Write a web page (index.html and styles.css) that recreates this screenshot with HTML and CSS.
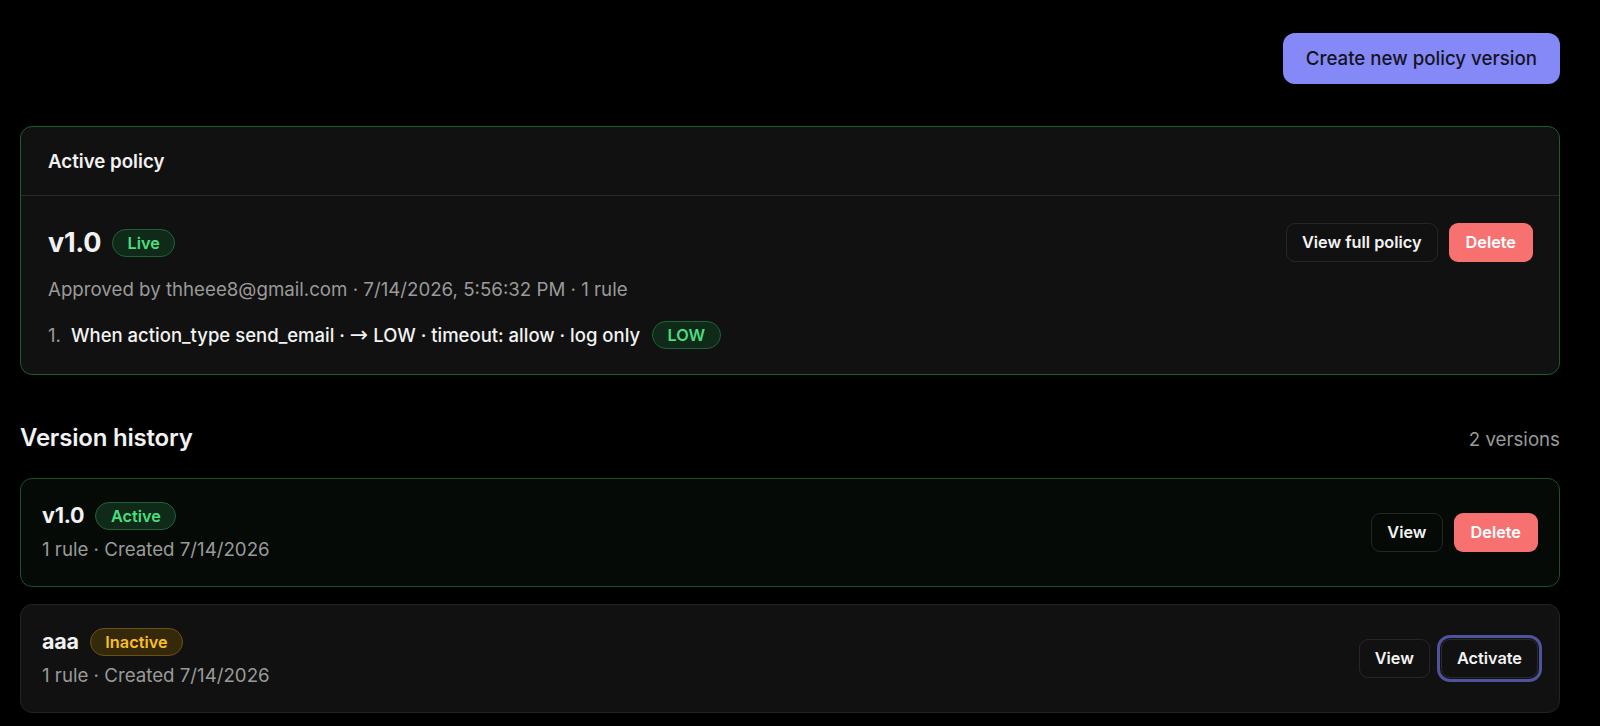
FILE: index.html
```html
<!DOCTYPE html>
<html lang="en">
<head>
<meta charset="utf-8">
<title>Policies</title>
<link rel="stylesheet" href="styles.css">
</head>
<body>
<main class="page">
  <div class="toolbar">
    <button class="btn btn-primary">Create new policy version</button>
  </div>

  <section class="card card-active">
    <header class="card-head">Active policy</header>
    <div class="card-body">
      <div class="policy-top">
        <div class="title-row">
          <h2 class="ver-big">v1.0</h2>
          <span class="badge badge-green">Live</span>
        </div>
        <div class="actions">
          <button class="btn btn-ghost">View full policy</button>
          <button class="btn btn-danger">Delete</button>
        </div>
      </div>
      <p class="meta">Approved by thheee8@gmail.com · 7/14/2026, 5:56:32 PM · 1 rule</p>
      <ol class="rules">
        <li><span class="num">1.</span><span class="rule-text">When action_type send_email · <span class="arrow">→</span> LOW · timeout: allow · log only</span><span class="badge badge-green">LOW</span></li>
      </ol>
    </div>
  </section>

  <div class="section-head">
    <h3>Version history</h3>
    <span class="count">2 versions</span>
  </div>

  <div class="versions">
    <div class="vcard vcard-active">
      <div class="vinfo">
        <div class="title-row">
          <span class="ver">v1.0</span>
          <span class="badge badge-green">Active</span>
        </div>
        <div class="vmeta">1 rule · Created 7/14/2026</div>
      </div>
      <div class="actions">
        <button class="btn btn-ghost">View</button>
        <button class="btn btn-danger">Delete</button>
      </div>
    </div>
    <div class="vcard">
      <div class="vinfo">
        <div class="title-row">
          <span class="ver">aaa</span>
          <span class="badge badge-amber">Inactive</span>
        </div>
        <div class="vmeta">1 rule · Created 7/14/2026</div>
      </div>
      <div class="actions">
        <button class="btn btn-ghost">View</button>
        <button class="btn btn-ghost btn-focus">Activate</button>
      </div>
    </div>
  </div>
</main>
</body>
</html>
```
FILE: styles.css
```css
* { box-sizing: border-box; }
html, body { margin: 0; background: #000; }
body {
  font-family: Inter, "Noto Sans", "Liberation Sans", sans-serif;
  color: #f2f2f2;
  -webkit-font-smoothing: antialiased;
}
.page {
  padding: 33px 40px 0 20px;
}
.toolbar {
  display: flex;
  justify-content: flex-end;
  margin-bottom: 42px;
}
.btn {
  font-family: inherit;
  cursor: pointer;
  border-radius: 9px;
  font-size: 16.3px;
  font-weight: 600;
  line-height: 21px;
  padding: 8px 16px;
  border: 1px solid transparent;
}
.btn-primary {
  background: #8589f8;
  color: #14141f;
  font-size: 18.7px;
  font-weight: 500;
  line-height: 25px;
  padding: 12px 22px;
  border-radius: 12px;
}
.btn-ghost {
  background: transparent;
  color: #f3f3f3;
  border-color: #262626;
  padding: 8px 15px;
}
.btn-danger {
  background: #f87171;
  color: #fff;
}
.btn-focus {
  outline: 3px solid #4f529c;
  outline-offset: 1px;
  border-color: #2b2b2b;
}
.card {
  background: #111111;
  border: 1px solid #1f5a2e;
  border-radius: 12px;
}
.card-head {
  height: 69px;
  display: flex;
  align-items: center;
  padding: 0 27px;
  font-size: 18.7px;
  font-weight: 600;
  border-bottom: 1px solid #282828;
}
.card-body {
  padding: 27px 26px 25px 27px;
}
.policy-top {
  display: flex;
  align-items: center;
  justify-content: space-between;
}
.title-row {
  display: flex;
  align-items: center;
  gap: 11px;
}
.ver-big {
  margin: 0;
  font-size: 27px;
  font-weight: 700;
  letter-spacing: -0.3px;
  line-height: 34px;
}
.actions {
  display: flex;
  gap: 11px;
}
.badge {
  display: inline-flex;
  align-items: center;
  height: 28px;
  padding: 0 14.5px;
  border-radius: 999px;
  font-size: 16.3px;
  font-weight: 600;
  border: 1px solid;
}
.badge-green {
  background: #0f2a18;
  border-color: #22603a;
  color: #4ade80;
}
.badge-amber {
  background: #35290b;
  border-color: #6b5214;
  color: #fbbf24;
}
.meta {
  margin: 14px 0 0;
  font-size: 18.7px;
  line-height: 28px;
  color: #9a9a9a;
}
.rules {
  list-style: none;
  margin: 17px 0 0;
  padding: 0;
}
.rules li {
  display: flex;
  align-items: center;
  font-size: 18.5px;
  line-height: 28px;
  height: 28px;
}
.num {
  color: #9a9a9a;
  width: 23px;
}
.rule-text {
  color: #f3f3f3;
  font-weight: 500;
  margin-right: 12px;
}
.arrow {
  font-family: "DejaVu Sans", sans-serif;
  font-weight: 400;
  font-size: 22px;
  line-height: 1;
}
.section-head {
  display: flex;
  align-items: baseline;
  justify-content: space-between;
  margin: 48px 0 25px;
}
.section-head h3 {
  margin: 0;
  font-size: 24px;
  font-weight: 600;
  line-height: 30px;
  letter-spacing: -0.2px;
}
.count {
  font-size: 18.7px;
  color: #9a9a9a;
}
.versions {
  display: flex;
  flex-direction: column;
  gap: 17px;
}
.vcard {
  display: flex;
  align-items: center;
  justify-content: space-between;
  padding: 22px 21px 22px 21px;
  border-radius: 12px;
  background: #111111;
  border: 1px solid #222222;
}
.vcard-active {
  background: #050a06;
  border-color: #1d4f2a;
}
.vinfo {
  display: flex;
  flex-direction: column;
  gap: 6px;
}
.ver {
  font-size: 21.5px;
  font-weight: 700;
  line-height: 29px;
  letter-spacing: -0.2px;
}
.vmeta {
  font-size: 18.7px;
  line-height: 28px;
  color: #9a9a9a;
}
```
